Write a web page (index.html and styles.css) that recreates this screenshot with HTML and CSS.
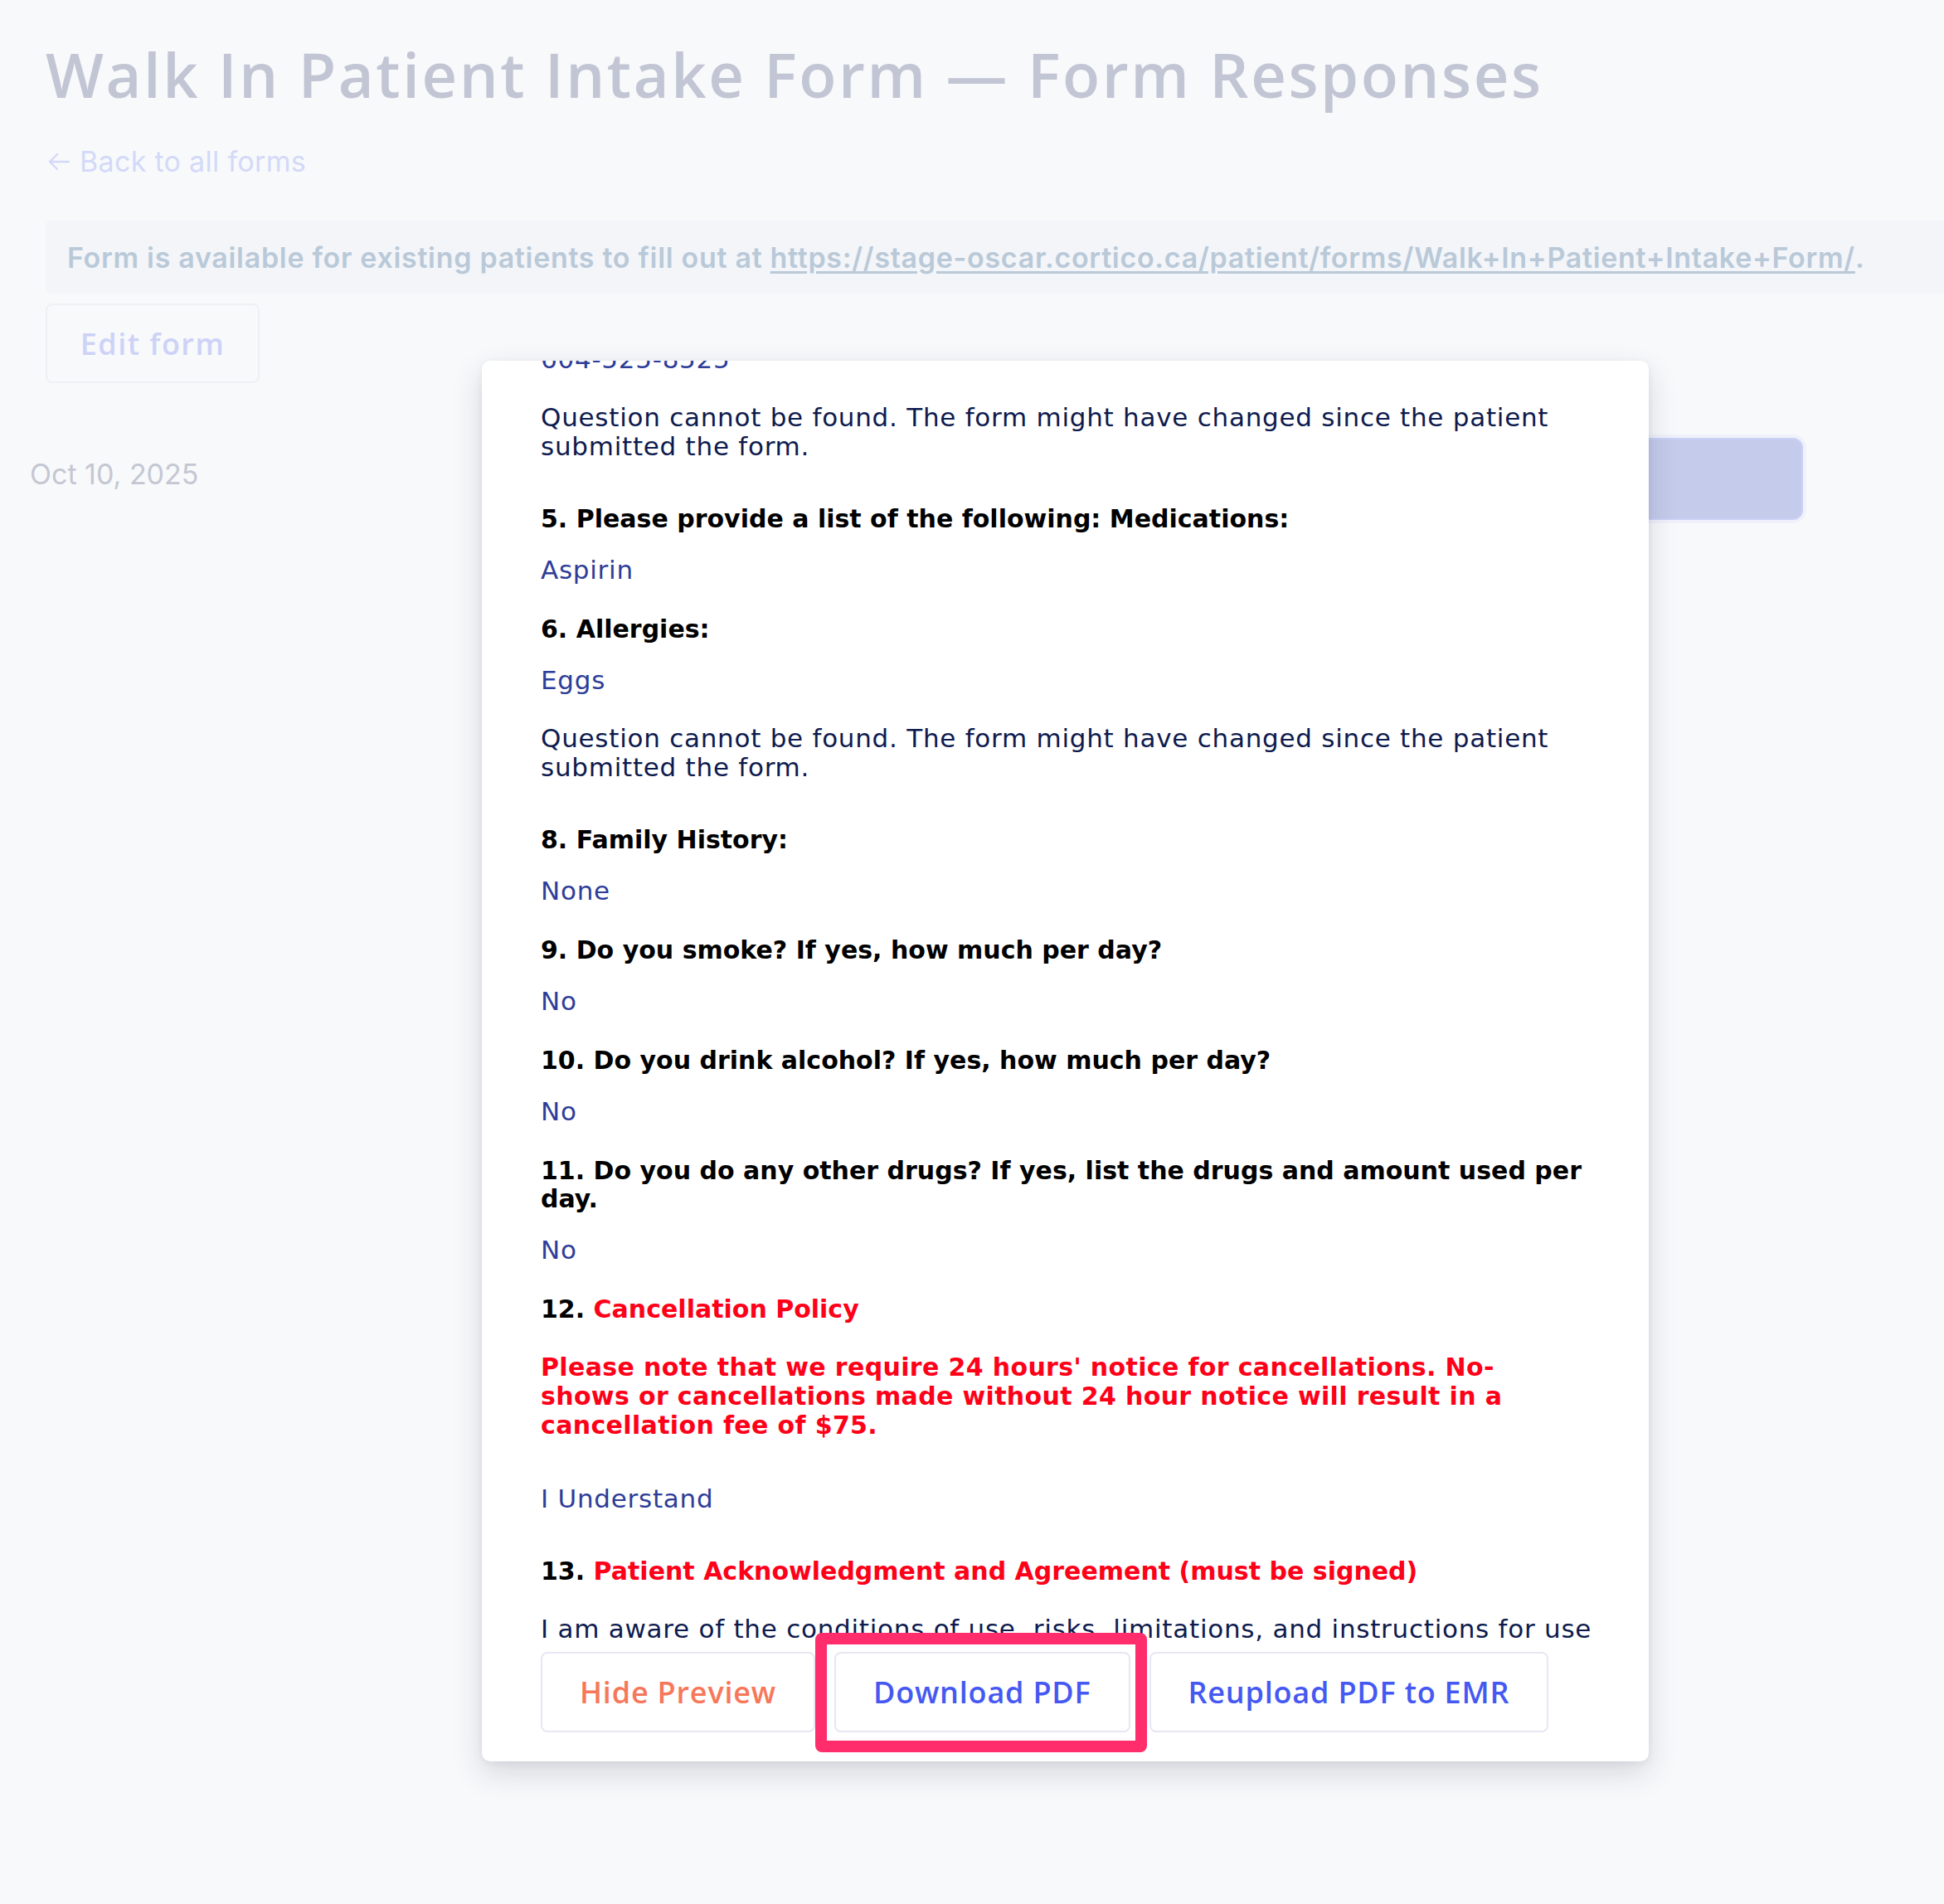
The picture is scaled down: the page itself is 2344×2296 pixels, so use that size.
FILE: index.html
```html
<!DOCTYPE html>
<html lang="en">
<head>
<meta charset="utf-8">
<title>Walk In Patient Intake Form — Form Responses</title>
<link rel="stylesheet" href="styles.css">
</head>
<body>
<div class="page">
  <h1 class="title">Walk In Patient Intake Form — Form Responses</h1>
  <a class="back" href="#">
    <svg class="back-icon" viewBox="0 0 32 32" width="32" height="32" aria-hidden="true"><path d="M28 16H5M14 7l-9 9 9 9" fill="none" stroke="currentColor" stroke-width="2.4" stroke-linecap="round" stroke-linejoin="round"/></svg>
    <span>Back to all forms</span>
  </a>
  <div class="notice">Form is available for existing patients to fill out at&nbsp;<a href="#">https://stage-oscar.cortico.ca/patient/forms/Walk+In+Patient+Intake+Form/</a>.</div>
  <button class="edit-btn" type="button">Edit form</button>
  <div class="row">
    <span class="date">Oct 10, 2025</span>
    <span class="row-btn"></span>
  </div>
</div>

<div class="modal">
  <div class="scroll">
    <div class="content">
      <p class="ans">604-525-8525</p>
      <p class="note">Question cannot be found. The form might have changed since the patient<br>submitted the form.</p>
      <h3 class="q">5. Please provide a list of the following: Medications:</h3>
      <p class="ans">Aspirin</p>
      <h3 class="q">6. Allergies:</h3>
      <p class="ans">Eggs</p>
      <p class="note">Question cannot be found. The form might have changed since the patient<br>submitted the form.</p>
      <h3 class="q">8. Family History:</h3>
      <p class="ans">None</p>
      <h3 class="q">9. Do you smoke? If yes, how much per day?</h3>
      <p class="ans">No</p>
      <h3 class="q">10. Do you drink alcohol? If yes, how much per day?</h3>
      <p class="ans">No</p>
      <h3 class="q">11. Do you do any other drugs? If yes, list the drugs and amount used per<br>day.</h3>
      <p class="ans">No</p>
      <h3 class="q">12. <span class="red">Cancellation Policy</span></h3>
      <p class="policy">Please note that we require 24 hours' notice for cancellations. No-<br>shows or cancellations made without 24 hour notice will result in a<br>cancellation fee of $75.</p>
      <p class="ans ack">I Understand</p>
      <h3 class="q">13. <span class="red">Patient Acknowledgment and Agreement (must be signed)</span></h3>
      <p class="text">I am aware of the conditions of use, risks, limitations, and instructions for use</p>
    </div>
  </div>
  <div class="actions">
    <button class="btn btn-hide" type="button">Hide Preview</button>
    <span class="focus-wrap">
      <button class="btn btn-blue" type="button">Download PDF</button>
      <span class="highlight"></span>
    </span>
    <button class="btn btn-blue" type="button">Reupload PDF to EMR</button>
  </div>
</div>
</body>
</html>
```

FILE: styles.css
```css
* { box-sizing: border-box; margin: 0; padding: 0; }
html, body { background: #f8f9fb; }
body {
  width: 2344px;
  height: 2296px;
  overflow: hidden;
  position: relative;
  font-family: Inter, "Noto Sans", sans-serif;
}

.page { padding: 46px 170px 0 55px; }

.title {
  font-family: "Open Sans", sans-serif;
  font-weight: 600;
  font-size: 74px;
  line-height: 88px;
  color: #c2c5d3;
  letter-spacing: 2.6px;
  white-space: nowrap;
}

.back {
  display: flex;
  align-items: center;
  gap: 9px;
  width: max-content;
  margin-top: 41px;
  font-size: 34px;
  line-height: 40px;
  letter-spacing: 0.3px;
  color: #d3d9f8;
  text-decoration: none;
}
.back-icon { display: block; }

.notice {
  display: flex;
  align-items: center;
  height: 88px;
  margin: 51px -170px 0 0;
  padding-left: 26px;
  background: #f3f5f9;
  border-radius: 6px 0 0 6px;
  font-size: 34px;
  font-weight: 600;
  letter-spacing: 0.69px;
  color: #b9c9d8;
  white-space: nowrap;
}
.notice a { color: inherit; text-decoration: underline; text-underline-offset: 4px; }

.edit-btn {
  display: block;
  width: 258px;
  height: 96px;
  margin-top: 12px;
  border: 2px solid #eef0f4;
  border-radius: 8px;
  background: transparent;
  font-family: "Open Sans", sans-serif;
  font-weight: 600;
  font-size: 36px;
  letter-spacing: 1.5px;
  color: #cdd2f7;
}

.row {
  display: flex;
  align-items: center;
  justify-content: space-between;
  height: 99px;
  margin: 66px 0 0 -19px;
}
.date { margin-bottom: 12px; font-size: 34px; line-height: 40px; color: #c4c7d3; }
.row-btn {
  width: 260px;
  height: 99px;
  background: #c5cbeb;
  border: 2px solid #c9d1f6;
  border-radius: 12px;
  box-shadow: 0 0 0 4px #eff1fb;
}

/* modal */
.modal {
  position: absolute;
  left: 581px;
  top: 435px;
  width: 1407px;
  height: 1689px;
  display: flex;
  flex-direction: column;
  padding: 0 50px 35px 71px;
  background: #fff;
  border-radius: 10px;
  box-shadow: 0 14px 36px rgba(30, 35, 60, 0.16), 0 2px 8px rgba(30, 35, 60, 0.06);
}
.scroll { height: 1548px; overflow: hidden; flex: none; }
.content {
  margin-top: -19px;
  font-family: "DejaVu Sans", Inter, sans-serif;
  font-size: 31px;
  line-height: 35px;
  letter-spacing: 0.74px;
}

.ans { color: #2e3d98; }
.note, .text { color: #0e1b4e; }
.q { font-size: 30px; line-height: 34px; font-weight: 700; letter-spacing: 0; color: #000; }
.red { color: #fe0018; }
.policy { font-size: 30px; font-weight: 700; letter-spacing: 0.35px; color: #fe0018; }

.ans + .note { margin-top: 35px; }
.note + .q { margin-top: 53px; }
.q + .ans { margin-top: 27px; }
.ans + .q { margin-top: 37px; }
.q + .policy { margin-top: 35px; }
.policy + .ans { margin-top: 54px; }
.ans.ack + .q { margin-top: 53px; }
.q + .text { margin-top: 35px; }

.actions {
  display: flex;
  gap: 23px;
  margin-top: 9px;
}
.btn {
  height: 97px;
  padding: 0 45px;
  border: 2px solid #e7e7f4;
  border-radius: 8px;
  background: #fff;
  font-family: "Open Sans", sans-serif;
  font-weight: 600;
  font-size: 36px;
  letter-spacing: 0.8px;
  white-space: nowrap;
}
.btn-hide { color: #f7775a; }
.btn-blue { color: #4559f2; }

.focus-wrap { position: relative; display: flex; }
.highlight {
  position: absolute;
  top: -23px;
  bottom: -24px;
  left: -23px;
  right: -20px;
  border: 14px solid #ff2d6b;
  border-radius: 8px;
  pointer-events: none;
}
```
